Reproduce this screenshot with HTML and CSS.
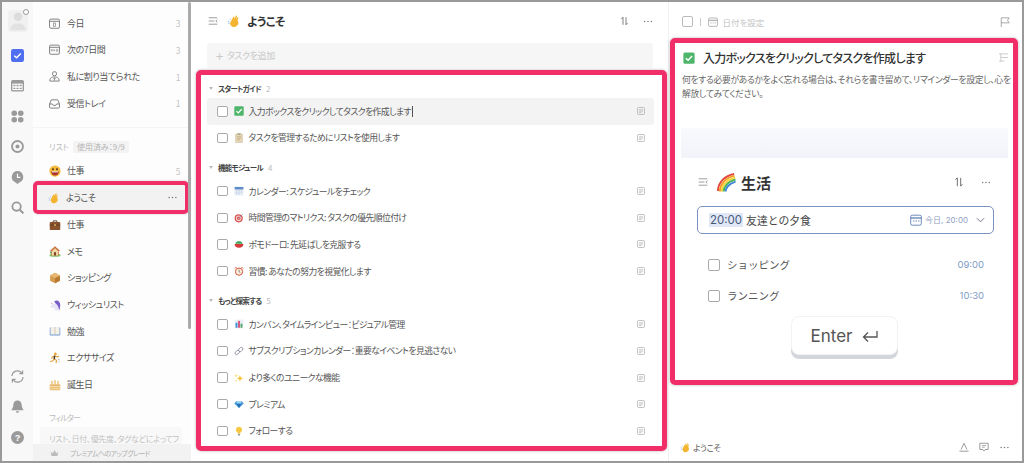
FILE: index.html
```html
<!DOCTYPE html>
<html lang="ja">
<head>
<meta charset="utf-8">
<title>ようこそ</title>
<link rel="stylesheet" href="styles.css">
</head>
<body>
<svg class="defs" width="0" height="0" aria-hidden="true">
  <symbol id="e-smile" viewBox="0 0 16 16"><circle cx="8" cy="8" r="7.5" fill="#f5b93c"/><ellipse cx="5.3" cy="5.5" rx="1.1" ry="1.6" fill="#5c3a1e"/><ellipse cx="10.7" cy="5.5" rx="1.1" ry="1.6" fill="#5c3a1e"/><path d="M3 8.5h10c0 3.5-2.4 5.5-5 5.5s-5-2-5-5.5z" fill="#a8322c"/><path d="M4 8.5h8v1.3H4z" fill="#fff"/></symbol>
  <symbol id="e-wave" viewBox="0 0 16 16"><path d="M6 14.5C3.8 13.2 3 10.8 4 9.2L7.2 3.4c.4-.8 1.5-.4 1.3.5L8 6l2.2-3.8c.5-.8 1.6-.3 1.3.6L10.3 6l1.6-2c.6-.7 1.5 0 1.1.8l-1.2 2.3c1.2.4 1.6 3 .9 4.7-1 2.500-4.200 3.700-6.700 2.700z" fill="#f3b42f"/><path d="M1 8l1.500 1M1.500 11l1.500-.5M2.800 5.500l1 1" stroke="#7fb2e5" stroke-width="1" fill="none"/></symbol>
  <symbol id="e-case" viewBox="0 0 16 16"><path d="M5.500 4V2.500h5V4" fill="none" stroke="#5a3a22" stroke-width="1.200"/><rect x="1" y="4" width="14" height="10.500" rx="1" fill="#87512c"/><rect x="1" y="7.500" width="14" height="1" fill="#5f381d"/><rect x="6.800" y="7" width="2.400" height="2" fill="#e5b860"/></symbol>
  <symbol id="e-house" viewBox="0 0 16 16"><ellipse cx="8" cy="13.500" rx="7.500" ry="2" fill="#7cc56c"/><path d="M8 1.500 15 8H13v6H3V8H1z" fill="#c9703a"/><path d="M4 8l4-3.600L12 8v6H4z" fill="#f0d9a8"/><rect x="6.600" y="9.500" width="2.800" height="4.500" fill="#7b4a25"/><path d="M1 8 3.500 10 2 12z" fill="#4aa05a"/></symbol>
  <symbol id="e-box" viewBox="0 0 16 16"><path d="M8 1 14.500 4.500v7L8 15 1.500 11.500v-7z" fill="#d49a4e"/><path d="M8 8l6.500-3.500v7L8 15z" fill="#b87a33"/><path d="M1.500 4.500 8 1l6.500 3.500L8 8z" fill="#e8b873"/></symbol>
  <symbol id="e-unicorn" viewBox="0 0 16 16"><path d="M2 4l4 2.500c3-2 7-1 8 3 .5 2 .5 3.500 0 5.500H7.500c.5-2 0-3-1.500-3.500L3.500 12 2 9.500 4 7.500z" fill="#e8e4f8"/><path d="M7 3c4-2.500 8 .5 8 5 0 2.500-.5 4-1 7-1-2-1.200-5-3-7-1-1.200-2.500-2-4-5z" fill="#7a5cc8"/><path d="M2 4l2.800 2.200L3.500 7z" fill="#eda7c6"/></symbol>
  <symbol id="e-book" viewBox="0 0 16 16"><rect x="1" y="3" width="14" height="11" rx="1" fill="#6d9bd6"/><path d="M2 2.500h5.500L8 3.500l.5-1H14V12.500H8.500L8 13l-.5-.5H2z" fill="#f5f1e6"/><path d="M8 3v10" stroke="#a8a39a" stroke-width=".6"/></symbol>
  <symbol id="e-run" viewBox="0 0 16 16"><circle cx="8.500" cy="2.500" r="1.800" fill="#e8a33d"/><path d="M7.500 5 11 6.500l2.500-1M7.500 5 7 9.500l3 1.500-.5 4M7 9.500 4.500 12 1.500 13M7.500 5 4.500 6.500 3.500 9" stroke="#e8a33d" stroke-width="1.500" fill="none"/><path d="M7.500 5 7 9.500" stroke="#3a3a3a" stroke-width="2"/><path d="M12 10h2M12.500 12.500h1.500" stroke="#888" stroke-width=".8"/></symbol>
  <symbol id="e-cake" viewBox="0 0 16 16"><rect x="1" y="7" width="14" height="8" rx="1" fill="#e6b66a"/><rect x="1" y="9.500" width="14" height="1.500" fill="#f7e4b4"/><rect x="1" y="12.500" width="14" height="1.200" fill="#f7e4b4"/><path d="M4 2.500v4M8 1.500v5M12 2.500v4" stroke="#e7a02e" stroke-width="1.300"/></symbol>
  <symbol id="e-check" viewBox="0 0 16 16"><rect x=".5" y=".5" width="15" height="15" rx="2" fill="#4fb56b"/><path d="M3.800 8.200 6.800 11 12.200 5.200" fill="none" stroke="#fff" stroke-width="1.900"/></symbol>
  <symbol id="e-memo" viewBox="0 0 16 16"><rect x="2.500" y="1.500" width="11" height="14" rx="1" fill="#e7d8b9" stroke="#c0a67c" stroke-width=".6"/><rect x="5.500" y=".5" width="5" height="2.500" fill="#a8a08c"/><path d="M4.500 6h7M4.500 8.500h7M4.500 11h5" stroke="#b09a74" stroke-width=".9"/></symbol>
  <symbol id="e-cal" viewBox="0 0 16 16"><rect x="1" y="1.500" width="14" height="13.500" rx="1" fill="#e8eef7"/><rect x="1" y="1.500" width="14" height="4" fill="#5d8bc8"/><path d="M3 7.500h2M7 7.500h2M11 7.500h2M3 10h2M7 10h2M11 10h2M3 12.500h2M7 12.500h2" stroke="#9db4d4" stroke-width="1"/></symbol>
  <symbol id="e-target" viewBox="0 0 16 16"><circle cx="7.500" cy="8.500" r="6.500" fill="#d8504c"/><circle cx="7.500" cy="8.500" r="4.500" fill="#f3d9d5"/><circle cx="7.500" cy="8.500" r="2.800" fill="#d8504c"/><circle cx="7.500" cy="8.500" r="1.100" fill="#f3d9d5"/><path d="M7.500 8.500 14 2" stroke="#6f8fb8" stroke-width="1"/></symbol>
  <symbol id="e-tomato" viewBox="0 0 16 16"><path d="M1 8h14c0 4-2.500 6-7 6s-7-2-7-6z" fill="#d43a3a"/><path d="M2 7.500C3 4 5.500 3.500 8 3.500s5 .5 6 4z" fill="#3fa35b"/></symbol>
  <symbol id="e-clock" viewBox="0 0 16 16"><circle cx="8" cy="9" r="5.800" fill="#fbeee0" stroke="#d8563c" stroke-width="1.600"/><path d="M8 5.800V9l2 1.300" stroke="#5b4030" stroke-width="1" fill="none"/><path d="M1.500 4 4 1.500M14.500 4 12 1.500" stroke="#d8563c" stroke-width="1.600"/></symbol>
  <symbol id="e-bars" viewBox="0 0 16 16"><rect x="1" y="1" width="14" height="14" fill="#e9eef6"/><rect x="2.500" y="6" width="3" height="8" fill="#3f8fd6"/><rect x="6.500" y="3" width="3" height="11" fill="#d5527c"/><rect x="10.500" y="7.500" width="3" height="6.500" fill="#4fa866"/></symbol>
  <symbol id="e-link" viewBox="0 0 16 16"><g fill="none" stroke="#8d939c" stroke-width="1.400"><rect x="1.300" y="7.800" width="8" height="5" rx="2.500" transform="rotate(-45 5.300 10.300)"/><rect x="6.700" y="3.200" width="8" height="5" rx="2.500" transform="rotate(-45 10.700 5.700)"/></g></symbol>
  <symbol id="e-spark" viewBox="0 0 16 16"><path d="M9.500 3l1.500 4 4 1.500-4 1.500-1.500 4L8 10 4 8.500 8 7z" fill="#f5c33b"/><path d="M3.500 1.500l.8 2 2 .8-2 .8-.8 2-.8-2-2-.8 2-.8zM3.500 10.500l.6 1.500 1.500.6-1.500.6-.6 1.500-.6-1.500-1.500-.6 1.500-.6z" fill="#f8d868"/></symbol>
  <symbol id="e-gem" viewBox="0 0 16 16"><path d="M4 3h8l3.500 4L8 14.500.5 7z" fill="#3f94d8"/><path d="M4.500 7h7L8 14.500z" fill="#1f6fb5"/><path d="M4 3l.5 4h7L12 3z" fill="#9fd3f3"/></symbol>
  <symbol id="e-bulb" viewBox="0 0 16 16"><path d="M8 1a5 5 0 0 0-3 9c.7.6 1 1.200 1 2h4c0-.8.300-1.400 1-2a5 5 0 0 0-3-9z" fill="#f6c83f"/><rect x="6.200" y="12.400" width="3.600" height="2.800" rx=".8" fill="#9a9a9a"/></symbol>
  <symbol id="e-rainbow" viewBox="0 0 20 20"><g fill="none" stroke-width="2"><path d="M1 19C1 11 7 3 18 1" stroke="#e2483d"/><path d="M3 19.500C3 13 8 5 18.500 3" stroke="#f39a2d"/><path d="M5 19.500C5 14 9.500 7 19 5" stroke="#f5d63c"/><path d="M7 19.500C7 15 11 9 19.500 7" stroke="#4db45a"/><path d="M9 19.500C9 16 12.500 11 19.500 9" stroke="#3f86d8"/></g></symbol>
  <symbol id="i-lines" viewBox="0 0 14 12"><path d="M1 1.500h12M1 6h8M1 10.500h12M13 4 11 6l2 2" fill="none" stroke="#777" stroke-width="1"/></symbol>
  <symbol id="i-note" viewBox="0 0 10 10"><rect x=".7" y=".7" width="8.600" height="8.600" rx="1" fill="none" stroke="#aaa" stroke-width=".9"/><path d="M2.500 3.500h5M2.500 5.200h5M2.500 7h3" stroke="#aaa" stroke-width=".8"/></symbol>
  <symbol id="i-sort" viewBox="0 0 12 12"><path d="M4 11V1L1.800 3.400M8 1v10l2.200-2.400" fill="none" stroke="#666" stroke-width="1.100"/></symbol>
  <symbol id="i-dots" viewBox="0 0 12 4"><circle cx="1.500" cy="2" r="1" fill="#777"/><circle cx="6" cy="2" r="1" fill="#777"/><circle cx="10.500" cy="2" r="1" fill="#777"/></symbol>
  <symbol id="i-calsm" viewBox="0 0 12 12"><rect x=".7" y="1.200" width="10.600" height="10" rx="1.500" fill="none" stroke="currentColor" stroke-width="1"/><path d="M.7 4h10.600" stroke="currentColor" stroke-width="1.400"/><path d="M3 7h1.500M5.500 7H7M8 7h1.500" stroke="currentColor" stroke-width="1"/></symbol>
</svg>

<div class="shell">
  <nav class="rail">
    <div class="avatar"><svg viewBox="0 0 20 26" class="avatar-pic"><circle cx="10" cy="8" r="5" fill="#dcdcdc"/><path d="M1 24c0-6 4-8 9-8s9 2 9 8z" fill="#e2e2e2"/></svg><span class="avatar-dot"></span></div>
    <div class="rail-top">
      <svg class="rail-icon" viewBox="0 0 14 14"><rect width="14" height="14" rx="2.500" fill="#4f6ef0"/><path d="M3.500 7.200 6 9.500 10.500 4.800" fill="none" stroke="#fff" stroke-width="1.500"/></svg>
      <svg class="rail-icon" viewBox="0 0 14 14"><rect y="1" width="14" height="12.500" rx="2" fill="#9a9a9a"/><rect x="1.500" y="5" width="11" height="7" fill="#fff"/><path d="M2.500 7h2.300M5.900 7h2.300M9.300 7h2.300M2.500 10h2.300M5.900 10h2.300M9.300 10h2.300" stroke="#9a9a9a" stroke-width="1.400"/></svg>
      <svg class="rail-icon" viewBox="0 0 14 14"><rect x=".5" y=".5" width="6" height="6" rx="3" fill="#9a9a9a"/><rect x="7.500" y=".5" width="6" height="6" rx="3" fill="#9a9a9a"/><rect x=".5" y="7.500" width="6" height="6" rx="3" fill="#9a9a9a"/><rect x="7.500" y="7.500" width="6" height="6" rx="3" fill="#9a9a9a"/></svg>
      <svg class="rail-icon" viewBox="0 0 14 14"><circle cx="7" cy="7" r="5.900" fill="none" stroke="#9a9a9a" stroke-width="2"/><circle cx="7" cy="7" r="2.200" fill="#9a9a9a"/></svg>
      <svg class="rail-icon" viewBox="0 0 14 14"><path d="M7 0a6.300 6.300 0 0 1 2.500 12L7 14l-2.500-2A6.300 6.300 0 0 1 7 0z" fill="#9a9a9a"/><path d="M7 3v3.800h3" fill="none" stroke="#fff" stroke-width="1.300"/></svg>
      <svg class="rail-icon" viewBox="0 0 14 14"><circle cx="6" cy="6" r="4.500" fill="none" stroke="#9a9a9a" stroke-width="2"/><path d="M9.500 9.500 13.300 13.300" stroke="#9a9a9a" stroke-width="2.200"/></svg>
    </div>
    <div class="rail-bottom">
      <svg class="rail-icon" viewBox="0 0 14 14"><path d="M1 6.500A6 6 0 0 1 11.500 3M13 7.500A6 6 0 0 1 2.500 11" fill="none" stroke="#9a9a9a" stroke-width="1.300"/><path d="M12.500 .5v3.500H9M1.500 13.500V10H5" fill="none" stroke="#9a9a9a" stroke-width="1.300"/></svg>
      <svg class="rail-icon" viewBox="0 0 14 14"><path d="M7 .5c-2.800 0-4.500 2-4.500 4.800 0 3-1.700 4.200-2 5.700h13c-.3-1.500-2-2.700-2-5.700C11.500 2.500 9.800.5 7 .5z" fill="#9a9a9a"/><path d="M5.200 12a1.800 1.800 0 0 0 3.600 0z" fill="#9a9a9a"/></svg>
      <svg class="rail-icon" viewBox="0 0 14 14"><circle cx="7" cy="7" r="7" fill="#9a9a9a"/><text x="7" y="10.500" class="help-mark">?</text></svg>
    </div>
  </nav>

  <aside class="side">
    <ul class="nav-list smart">
      <li class="nav-row"><svg class="nav-svg" viewBox="0 0 12 12"><rect x=".6" y="1.200" width="10.800" height="10" rx="1.500" fill="none" stroke="#777"/><path d="M.6 3.600h10.800" stroke="#777"/><rect x="5" y="5.500" width="2" height="3.500" fill="none" stroke="#777" stroke-width=".7"/></svg><span class="nav-name">今日</span><span class="nav-count">3</span></li>
      <li class="nav-row"><svg class="nav-svg" viewBox="0 0 12 12"><rect x=".6" y="1.200" width="10.800" height="10" rx="1.500" fill="none" stroke="#777"/><path d="M.6 3.600h10.800" stroke="#777"/><path d="M2.500 8V5.800l1 1.500 1-1.500V8M6 5.800V8M8 5.800h1.500V8H8z" fill="none" stroke="#777" stroke-width=".6"/></svg><span class="nav-name">次の7日間</span><span class="nav-count">3</span></li>
      <li class="nav-row"><svg class="nav-svg" viewBox="0 0 12 12"><circle cx="6" cy="3" r="2.300" fill="none" stroke="#777"/><path d="M1 11c-.6-3 1.800-4.500 5-4.500s5.600 1.500 5 4.500z" fill="none" stroke="#777"/><path d="M6 7.500v3M4.500 9 6 7.500 7.500 9" fill="none" stroke="#777" stroke-width=".8"/></svg><span class="nav-name">私に割り当てられた</span><span class="nav-count">1</span></li>
      <li class="nav-row"><svg class="nav-svg" viewBox="0 0 12 12"><path d="M.6 6.500 2.500 2h7l1.900 4.500V10a1 1 0 0 1-1 1H1.600a1 1 0 0 1-1-1z" fill="none" stroke="#777"/><path d="M.6 6.500h3l1 1.500h2.800l1-1.500h3" fill="none" stroke="#777"/></svg><span class="nav-name">受信トレイ</span><span class="nav-count">1</span></li>
    </ul>
    <div class="side-label">
      <span>リスト</span><span class="side-badge">使用済み：9/9</span>
    </div>
    <ul class="nav-list">
      <li class="nav-row"><svg class="nav-emoji"><use href="#e-smile"/></svg><span class="nav-name">仕事</span><span class="nav-count">5</span></li>
      <li class="nav-row nav-current"><svg class="nav-emoji"><use href="#e-wave"/></svg><span class="nav-name">ようこそ</span><svg class="nav-dots"><use href="#i-dots"/></svg></li>
      <li class="nav-row"><svg class="nav-emoji"><use href="#e-case"/></svg><span class="nav-name">仕事</span></li>
      <li class="nav-row"><svg class="nav-emoji"><use href="#e-house"/></svg><span class="nav-name">メモ</span></li>
      <li class="nav-row"><svg class="nav-emoji"><use href="#e-box"/></svg><span class="nav-name">ショッピング</span></li>
      <li class="nav-row"><svg class="nav-emoji"><use href="#e-unicorn"/></svg><span class="nav-name">ウィッシュリスト</span></li>
      <li class="nav-row"><svg class="nav-emoji"><use href="#e-book"/></svg><span class="nav-name">勉強</span></li>
      <li class="nav-row"><svg class="nav-emoji"><use href="#e-run"/></svg><span class="nav-name">エクササイズ</span></li>
      <li class="nav-row"><svg class="nav-emoji"><use href="#e-cake"/></svg><span class="nav-name">誕生日</span></li>
    </ul>
    <div class="side-label filter-label"><span>フィルター</span></div>
    <div class="filter-box">リスト、日付、優先度、タグなどによってフ</div>
    <div class="upgrade">
      <svg class="crown" viewBox="0 0 12 10"><path d="M1 3l2.500 2.500L6 1l2.500 4.500L11 3l-1 6H2z" fill="#bbb"/></svg>
      <span>プレミアムへのアップグレード</span>
    </div>
    <div class="side-scroll"></div>
  </aside>

  <main class="main">
    <header class="main-head">
      <svg class="head-lines"><use href="#i-lines"/></svg>
      <svg class="head-emoji"><use href="#e-wave"/></svg>
      <h1 class="main-title">ようこそ</h1>
      <svg class="head-sort"><use href="#i-sort"/></svg>
      <svg class="head-dots"><use href="#i-dots"/></svg>
    </header>
    <div class="add-task"><span class="add-plus">+</span><span>タスクを追加</span></div>
    <section class="task-frame">
      <div class="group-head"><span class="caret"></span><span class="group-name">スタートガイド</span><span class="group-count">2</span></div>
      <div class="task active"><span class="box"></span><svg class="task-emoji"><use href="#e-check"/></svg><span class="task-name">入力ボックスをクリックしてタスクを作成します<span class="text-cursor"></span></span><svg class="task-note"><use href="#i-note"/></svg></div>
      <div class="task"><span class="box"></span><svg class="task-emoji"><use href="#e-memo"/></svg><span class="task-name">タスクを管理するためにリストを使用します</span><svg class="task-note"><use href="#i-note"/></svg></div>

      <div class="group-head spaced"><span class="caret"></span><span class="group-name">機能モジュール</span><span class="group-count">4</span></div>
      <div class="task"><span class="box"></span><svg class="task-emoji"><use href="#e-cal"/></svg><span class="task-name">カレンダー: スケジュールをチェック</span><svg class="task-note"><use href="#i-note"/></svg></div>
      <div class="task"><span class="box"></span><svg class="task-emoji"><use href="#e-target"/></svg><span class="task-name">時間管理のマトリクス: タスクの優先順位付け</span><svg class="task-note"><use href="#i-note"/></svg></div>
      <div class="task"><span class="box"></span><svg class="task-emoji"><use href="#e-tomato"/></svg><span class="task-name">ポモドーロ: 先延ばしを克服する</span><svg class="task-note"><use href="#i-note"/></svg></div>
      <div class="task"><span class="box"></span><svg class="task-emoji"><use href="#e-clock"/></svg><span class="task-name">習慣: あなたの努力を視覚化します</span><svg class="task-note"><use href="#i-note"/></svg></div>

      <div class="group-head spaced"><span class="caret"></span><span class="group-name">もっと探索する</span><span class="group-count">5</span></div>
      <div class="task"><span class="box"></span><svg class="task-emoji"><use href="#e-bars"/></svg><span class="task-name">カンバン、タイムラインビュー：ビジュアル管理</span><svg class="task-note"><use href="#i-note"/></svg></div>
      <div class="task"><span class="box"></span><svg class="task-emoji"><use href="#e-link"/></svg><span class="task-name">サブスクリプションカレンダー：重要なイベントを見逃さない</span><svg class="task-note"><use href="#i-note"/></svg></div>
      <div class="task"><span class="box"></span><svg class="task-emoji"><use href="#e-spark"/></svg><span class="task-name">より多くのユニークな機能</span><svg class="task-note"><use href="#i-note"/></svg></div>
      <div class="task"><span class="box"></span><svg class="task-emoji"><use href="#e-gem"/></svg><span class="task-name">プレミアム</span><svg class="task-note"><use href="#i-note"/></svg></div>
      <div class="task"><span class="box"></span><svg class="task-emoji"><use href="#e-bulb"/></svg><span class="task-name">フォローする</span><svg class="task-note"><use href="#i-note"/></svg></div>
    </section>
  </main>

  <section class="detail">
    <header class="detail-top">
      <span class="box box-light"></span>
      <span class="detail-sep"></span>
      <svg class="detail-cal"><use href="#i-calsm"/></svg>
      <span class="detail-date">日付を設定</span>
      <svg class="detail-flag" viewBox="0 0 12 12"><path d="M1.500 12V1h9.500L9 4l2 3H1.500" fill="none" stroke="#999"/></svg>
    </header>
    <div class="detail-frame">
      <div class="detail-title-row">
        <svg class="detail-check"><use href="#e-check"/></svg>
        <h2 class="detail-title">入力ボックスをクリックしてタスクを作成します</h2>
        <svg class="detail-sort" viewBox="0 0 10 10"><path d="M0 1h10M2 5h8M0 9h6M2 .5v9" fill="none" stroke="#bbb" stroke-width=".8"/></svg>
      </div>
      <p class="detail-desc">何をする必要があるかをよく忘れる場合は、それらを書き留めて、リマインダーを設定し、心を<br>解放してみてください。</p>
      <div class="demo-band"></div>
      <div class="demo">
        <div class="demo-head">
          <svg class="demo-lines"><use href="#i-lines"/></svg>
          <svg class="demo-rainbow"><use href="#e-rainbow"/></svg>
          <span class="demo-title">生活</span>
          <svg class="demo-sort"><use href="#i-sort"/></svg>
          <svg class="demo-dots"><use href="#i-dots"/></svg>
        </div>
        <div class="demo-input">
          <span class="demo-time">20:00</span>
          <span class="demo-text">友達との夕食</span>
          <svg class="demo-cal"><use href="#i-calsm"/></svg>
          <span class="demo-when">今日, 20:00</span>
          <svg class="demo-chev" viewBox="0 0 10 6"><path d="M1 1l4 4 4-4" fill="none" stroke="#667" stroke-width="1"/></svg>
        </div>
        <div class="demo-row demo-row-first"><span class="box box-demo"></span><span class="demo-name">ショッピング</span><span class="demo-at">09:00</span></div>
        <div class="demo-row"><span class="box box-demo"></span><span class="demo-name">ランニング</span><span class="demo-at">10:30</span></div>
        <div class="enter-key"><span>Enter</span><svg class="enter-arrow" viewBox="0 0 16 12"><path d="M15 1v6H2M6 2.500 1.500 7 6 11.500" fill="none" stroke="#555" stroke-width="1.300"/></svg></div>
      </div>
    </div>
    <footer class="detail-foot">
      <svg class="foot-emoji"><use href="#e-wave"/></svg>
      <span class="foot-name">ようこそ</span>
      <svg class="foot-icon foot-first" viewBox="0 0 12 12"><path d="M2.500 9 6 1.500 9.500 9M.5 11h11" fill="none" stroke="#888"/></svg>
      <svg class="foot-icon" viewBox="0 0 12 12"><path d="M1 1.500h10v7.500H7.500L6 10.800 4.500 9H1z" fill="none" stroke="#888"/><path d="M3.500 4.200h5M3.500 6.300h3.500" stroke="#888" stroke-width=".8"/></svg>
      <svg class="foot-dots"><use href="#i-dots"/></svg>
    </footer>
  </section>
</div>
</body>
</html>
```

FILE: styles.css
```css
* { box-sizing: border-box; }
html, body { margin: 0; padding: 0; }
body {
  width: 1024px;
  height: 463px;
  overflow: hidden;
  background: #fff;
  font-family: "Noto Sans CJK JP", "Noto Sans", sans-serif;
  font-feature-settings: "palt";
  color: #555;
}
.defs { position: absolute; }
ul { list-style: none; margin: 0; padding: 0; }
h1, h2, p { margin: 0; }
svg { display: block; flex: none; }

.shell {
  display: flex;
  width: 1024px;
  height: 463px;
  border: 2px solid #999;
  overflow: hidden;
}

/* rail */
.rail {
  width: 31px;
  flex: none;
  background: #f8f8f8;
  display: flex;
  flex-direction: column;
  align-items: center;
  padding-top: 8px;
}
.avatar { position: relative; width: 20px; height: 22px; background: #f0f0f0; border-radius: 3px; margin-left: 1px; }
.avatar-pic { width: 20px; height: 22px; }
.avatar-dot { position: absolute; top: -1px; right: -1px; width: 6px; height: 6px; border: 1.500px solid #999; border-radius: 50%; background: #fff; }
.rail-top { display: flex; flex-direction: column; gap: 17.4px; margin-top: 17px; }
.rail-bottom { display: flex; flex-direction: column; gap: 17.7px; margin-top: auto; padding-bottom: 17px; }
.rail-icon { width: 13px; height: 13px; }
.help-mark { font: bold 10px "Liberation Sans", sans-serif; fill: #fff; text-anchor: middle; }

/* sidebar */
.side {
  position: relative;
  width: 158px;
  flex: none;
  display: flex;
  flex-direction: column;
  background: #fdfdfd;
  padding: 8px 0 0 0;
  overflow: hidden;
}
.nav-row {
  display: flex;
  align-items: center;
  height: 26.67px;
  padding: 0 11px 0 16px;
  font-size: 9px;
  letter-spacing: -.45px;
  color: #555;
}
.smart { border-bottom: 1px solid #f5f5f5; padding-bottom: 10px; }
.nav-svg { width: 11px; height: 11px; margin-right: 7px; }
.nav-emoji { width: 12px; height: 12px; margin-right: 6px; }
.nav-name { flex: 1; white-space: nowrap; }
.nav-count { font-size: 8.500px; color: #c4c4c4; }
.nav-dots { width: 9px; height: 3px; }
.nav-current {
  height: 33px;
  margin: -3px 0;
  background: #f2f2f2;
  border: 4px solid #f22e68;
  border-radius: 5px;
  padding: 0 8px 0 11px;
  box-shadow: 0 0 2px rgba(0,0,0,.25);
  width: 156px;
}
.side-label {
  display: flex;
  align-items: center;
  gap: 4px;
  height: 14px;
  margin-top: 12px;
  padding-left: 16px;
  margin-bottom: 4px;
  font-size: 8px;
  color: #bbb;
}
.side-badge { background: #f3f3f3; border-radius: 2px; padding: 0 4px; font-size: 8px; line-height: 12px; color: #b5b5b5; }
.filter-label { margin-top: 13px; margin-bottom: 2px; letter-spacing: -.8px; }
.filter-box {
  margin: 0 9px 0 7px;
  height: 34px;
  padding: 6px 0 0 9px;
  background: #f8f8f8;
  border-radius: 3px;
  font-size: 8px;
  line-height: 12px;
  letter-spacing: -.3px;
  color: #c2c2c2;
  white-space: nowrap;
}
.upgrade {
  position: absolute;
  left: 0; right: 0; bottom: 0;
  height: 17px;
  display: flex;
  align-items: center;
  gap: 11px;
  padding-left: 17px;
  background: #f2f2f2;
  font-size: 7px;
  letter-spacing: -.6px;
  color: #b0b0b0;
}
.crown { width: 9px; height: 8px; }
.side-scroll { position: absolute; top: 0; right: 0; width: 3px; height: 327px; background: #aaa; border-radius: 2px; }

/* main */
.main { width: 477px; flex: none; display: flex; flex-direction: column; background: #fff; }
.main-head { display: flex; align-items: center; height: 38px; padding: 0 15px 0 17px; flex: none; }
.head-lines { width: 10px; height: 10px; margin-right: 9px; }
.head-emoji { width: 14px; height: 14px; margin-right: 6px; }
.main-title { flex: 1; font-size: 11.500px; font-weight: 700; color: #333; letter-spacing: -.5px; }
.head-sort { width: 9px; height: 10px; margin-right: 14px; }
.head-dots { width: 10px; height: 3px; }
.add-task {
  display: flex;
  align-items: center;
  gap: 4px;
  flex: none;
  height: 25px;
  margin: 3px 15px 0 16px;
  padding-left: 9px;
  background: #f6f6f6;
  border-radius: 3px;
  font-size: 9px;
  letter-spacing: -.4px;
  color: #c8c8c8;
}
.add-plus { font-size: 13px; line-height: 1; }
.task-frame {
  flex: 1;
  min-height: 0;
  margin: 2px 1px 10px 5px;
  padding: 3px 8px 0 6px;
  border: 5px solid #f22e68;
  border-radius: 5px;
  box-shadow: 0 0 3px rgba(0,0,0,.3);
  overflow: hidden;
}
.group-head { display: flex; align-items: center; height: 20px; font-size: 7.500px; font-weight: 700; color: #444; padding-left: 2px; letter-spacing: -.7px; }
.group-head.spaced { margin-top: 6.500px; }
.caret { width: 0; height: 0; margin-right: 5px; border-left: 2.500px solid transparent; border-right: 2.500px solid transparent; border-top: 3px solid #bbb; }
.group-count { margin-left: 5px; font-weight: 400; color: #bbb; font-size: 8px; letter-spacing: 0; }
.task { display: flex; align-items: center; height: 26.67px; padding: 0 9px 0 10px; border-radius: 3px; font-size: 8.800px; color: #555; letter-spacing: -.55px; }
.task.active { background: #f3f3f3; }
.box { width: 10.500px; height: 10.500px; flex: none; border: 1px solid #aaa; border-radius: 2px; background: #fff; }
.task-emoji { width: 10px; height: 10px; margin-left: 6px; margin-right: 5px; }
.task-name { flex: 1; white-space: nowrap; display: flex; align-items: center; }
.text-cursor { width: 1px; height: 11px; background: #555; margin-left: 1px; }
.task-note { width: 8px; height: 8px; }

/* detail */
.detail { flex: 1; min-width: 0; display: flex; flex-direction: column; border-left: 1px solid #f0f0f0; background: #fff; }
.detail-top { display: flex; align-items: center; height: 36px; flex: none; padding: 3px 12px 0 13px; color: #bbb; }
.box-light { border-color: #bbb; }
.detail-sep { width: 1px; height: 8px; background: #ccc; margin: 0 7px; }
.detail-cal { width: 10px; height: 10px; margin-right: 5px; color: #aaa; }
.detail-date { flex: 1; font-size: 8.500px; color: #c4c4c4; }
.detail-flag { width: 10px; height: 10px; }
.detail-frame {
  flex: none;
  height: 347px;
  margin: 0 4px 0 1px;
  padding: 8px 4px 0 5px;
  border: 5px solid #f22e68;
  border-radius: 5px;
  box-shadow: 0 0 3px rgba(0,0,0,.3);
  overflow: hidden;
}
.detail-title-row { display: flex; align-items: center; height: 13px; padding-left: 3px; }
.detail-check { width: 12px; height: 12px; margin-right: 8px; }
.detail-title { flex: 1; font-size: 12px; font-weight: 500; color: #333; letter-spacing: -.72px; white-space: nowrap; }
.detail-sort { width: 9px; height: 9px; margin-right: 1px; }
.detail-desc { margin-top: 8.750px; font-size: 8.800px; line-height: 14.500px; color: #666; letter-spacing: -.32px; padding-left: 2px; white-space: nowrap; }
.demo-band { height: 30px; margin: 26px 1px 0; background: linear-gradient(#f9fafd, #f1f3f9); }
.demo { padding: 0 15px 0 17px; }
.demo-head { display: flex; align-items: center; height: 47px; margin-top: 1px; padding-left: 1px; }
.demo-lines { width: 10px; height: 10px; margin-right: 9px; }
.demo-rainbow { width: 19px; height: 19px; margin-right: 5px; }
.demo-title { flex: 1; font-size: 15px; font-weight: 700; color: #333; }
.demo-sort { width: 10px; height: 12px; margin-right: 16px; }
.demo-dots { width: 12px; height: 3px; margin-right: 2px; }
.demo-input {
  display: flex;
  align-items: center;
  height: 28px;
  padding: 0 8px 0 11px;
  border: 1px solid #7b93c0;
  border-radius: 5px;
}
.demo-time { font-family: "Inter", sans-serif; font-size: 11.500px; color: #4a5a78; background: #e0e8f8; padding: 0 1px; margin-right: 3px; }
.demo-text { flex: 1; font-size: 10.800px; color: #444; font-feature-settings: normal; }
.demo-cal { width: 12px; height: 12px; color: #6d8ab8; margin-right: 3px; }
.demo-when { font-size: 8px; font-family: "Inter", "Noto Sans CJK JP", sans-serif; color: #8ea0bf; margin-right: 8px; }
.demo-chev { width: 9px; height: 6px; }
.demo-row { display: flex; align-items: center; height: 31px; padding: 0 10px 0 11px; }
.demo-row-first { margin-top: 15.500px; }
.box-demo { width: 12px; height: 12px; margin-right: 7px; }
.demo-name { flex: 1; font-size: 10.500px; color: #555; font-feature-settings: normal; }
.demo-at { font-family: "Inter", sans-serif; font-size: 9.500px; color: #7f9cc4; }
.enter-key {
  display: flex;
  align-items: center;
  justify-content: center;
  gap: 10px;
  width: 107px;
  height: 39px;
  margin: 5px 0 0 94px;
  background: #fff;
  border: 1px solid #f3f3f3;
  border-radius: 8px;
  box-shadow: 0 4px 0 #d3d6dd;
  font-family: "Inter", sans-serif;
  font-size: 17px;
  color: #555;
}
.enter-arrow { width: 16px; height: 12px; }
.detail-foot { flex: 1; display: flex; align-items: center; padding: 0 13px 0 11px; margin-top: 48px; }
.foot-emoji { width: 11px; height: 11px; margin-right: 2px; }
.foot-name { flex: 1; font-size: 8.500px; color: #555; letter-spacing: -.5px; }
.foot-icon { width: 10px; height: 10px; margin-right: 10px; }
.foot-dots { width: 9px; height: 3px; margin-left: 1px; }
```
